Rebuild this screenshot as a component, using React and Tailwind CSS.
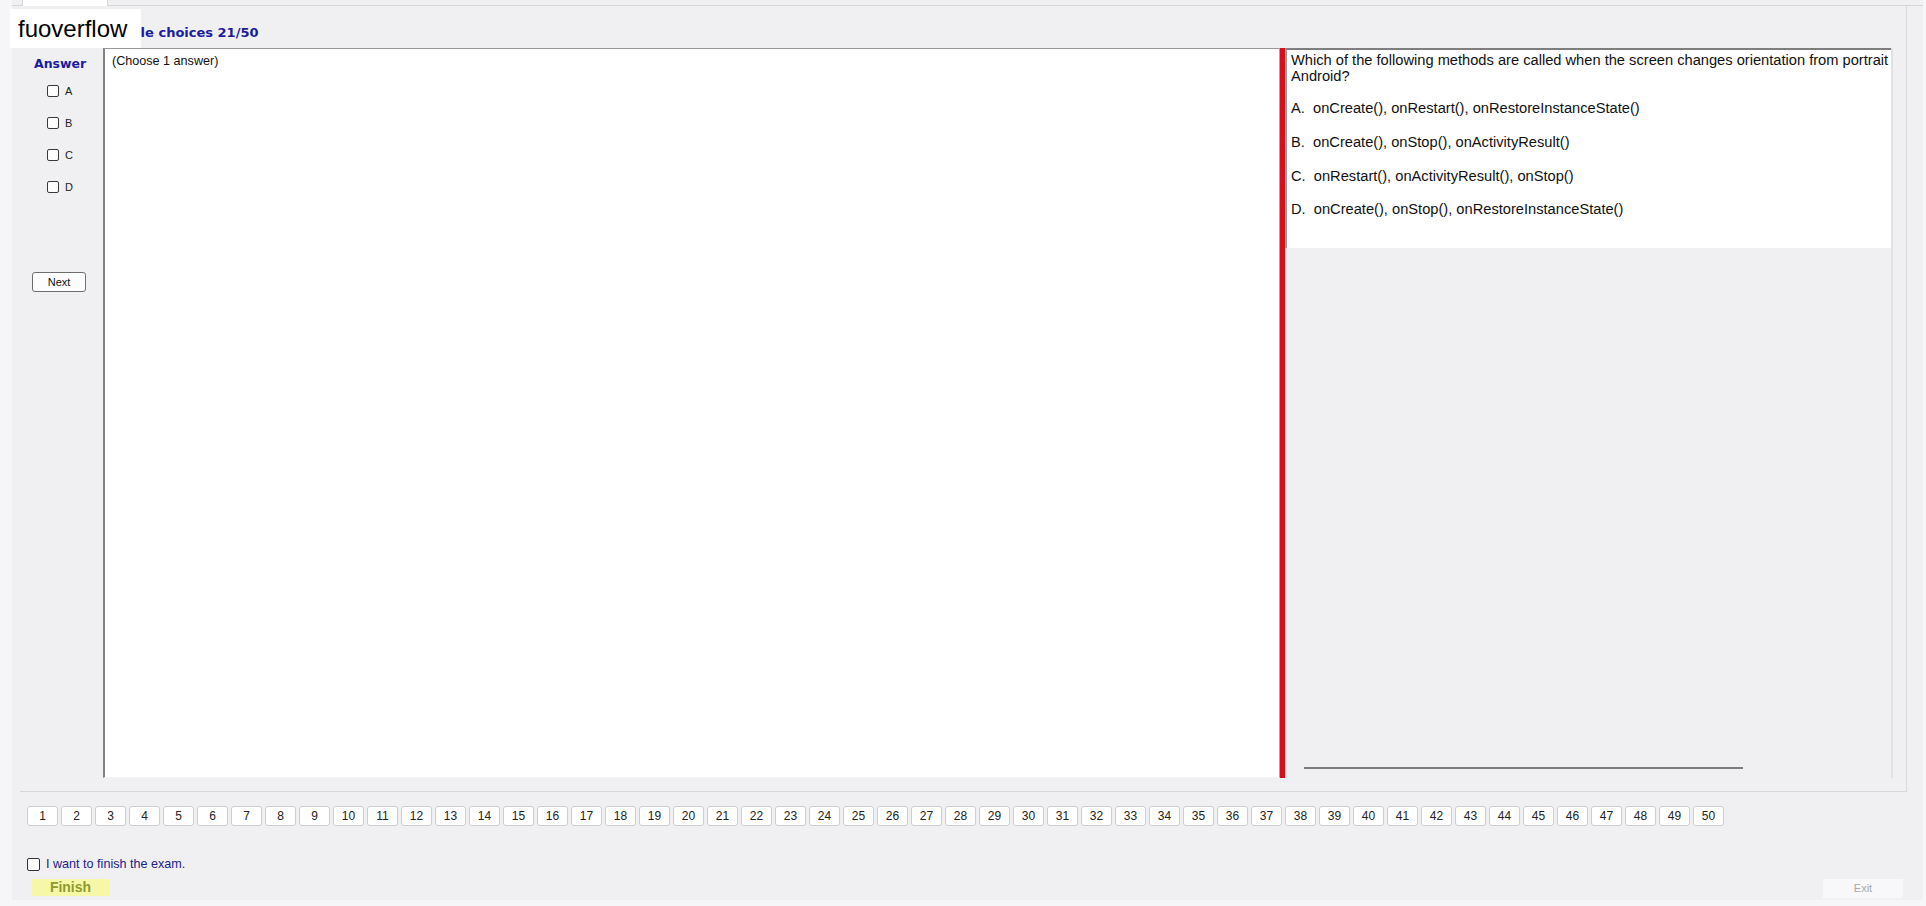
const letters = ["A", "B", "C", "D"];
const pages = Array.from({ length: 50 }, (_, i) => i + 1);

const options = [
  { key: "A", text: "onCreate(), onRestart(), onRestoreInstanceState()", mt: "mt-[16px]" },
  { key: "B", text: "onCreate(), onStop(), onActivityResult()", mt: "mt-[18px]" },
  { key: "C", text: "onRestart(), onActivityResult(), onStop()", mt: "mt-[18px]" },
  { key: "D", text: "onCreate(), onStop(), onRestoreInstanceState()", mt: "mt-[17px]" },
];

// small square checkbox like the winforms one
const Box = () => (
  <span className="block w-[12px] h-[12px] rounded-[2px] border border-[#3a3a3a] bg-white" />
);

const App = () => {
  return (
    <div className="relative w-[1926px] h-[906px] overflow-hidden bg-[#f6f6f8] font-['Liberation_Sans',Arial,sans-serif] text-[#111]">
      <div className="ml-[12px] w-[1911px] h-[900px] bg-[#f0f0f2] flex flex-col">
        {/* tab strip */}
        <div className="flex h-[6px] border-b border-[#d6d6d6]">
          <div className="ml-[10px] w-[86px] h-[6px] bg-white border-x border-[#d6d6d6]" />
        </div>

        {/* main frame */}
        <div className="ml-[8px] w-[1887px] h-[786px] flex flex-col border-r border-b border-[#d8d8da]">
          {/* title */}
          <div className="h-[42px] flex items-end pb-[8px] pl-[74px]">
            <span className="font-['DejaVu_Sans',Verdana,sans-serif] font-bold text-[13px] leading-[15px] text-[#1c1c9e]">
              Multiple choices 21/50
            </span>
          </div>

          <div className="h-[730px] flex">
            {/* answer column */}
            <div className="w-[83px] flex flex-col">
              <div className="pt-[8px] pl-[14px] font-['DejaVu_Sans',Verdana,sans-serif] font-bold text-[12.5px] leading-[15px] text-[#1c1c9e]">
                Answer
              </div>
              <div className="mt-[4px] flex flex-col">
                {letters.map((l) => (
                  <div key={l} className="h-[32px] flex items-center pl-[27px] gap-[6px]">
                    <Box />
                    <span className="text-[11px] text-[#222]">{l}</span>
                  </div>
                ))}
              </div>
              <button className="mt-[69px] ml-[12px] w-[54px] h-[20px] rounded-[3px] border border-[#6e6e6e] bg-[#fdfdfd] text-[11px] text-[#111] flex items-center justify-center">
                Next
              </button>
            </div>

            {/* answer text area */}
            <div className="w-[1177px] bg-white border-l-2 border-l-[#828282] border-t border-t-[#9a9a9a] border-r border-r-[#a8a8a8] border-b border-b-[#f4f4f4]">
              <div className="pl-[7px] pt-[4px] text-[12.6px] leading-[16px] text-[#111]">
                (Choose 1 answer)
              </div>
            </div>

            {/* splitter */}
            <div className="w-[5px] bg-[#d3101c]" />

            {/* question panel */}
            <div className="w-[608px] flex flex-col border-r-2 border-r-[#e2e2e4]">
              <div className="h-[200px] bg-white border-t-2 border-t-[#7e7e7e] border-l-2 border-l-[#9c9c9c] overflow-hidden pl-[4px] pt-[2px] text-[14.67px] leading-[16px] text-[#111]">
                <div className="whitespace-nowrap">
                  Which of the following methods are called when the screen changes orientation from portrait to landscape in
                </div>
                <div>Android?</div>
                {options.map((o) => (
                  <div key={o.key} className={`${o.mt} whitespace-pre`}>
                    {o.key + ".  " + o.text}
                  </div>
                ))}
              </div>
              <div className="flex-1 flex flex-col border-l border-[#e6e6e6]">
                <div className="mt-[519px] ml-[18px] w-[439px] h-[2px] bg-[#7c7c7c]" />
              </div>
            </div>
          </div>
        </div>

        {/* question navigator */}
        <div className="mt-[14px] pl-[15px] flex gap-[3px]">
          {pages.map((p) => (
            <button
              key={p}
              className="w-[31px] h-[20px] rounded-[3px] border border-[#cdcdcd] bg-white text-[12px] text-[#222] flex items-center justify-center"
            >
              {p}
            </button>
          ))}
        </div>

        {/* finish confirm */}
        <div className="mt-[31px] pl-[15px] flex items-center gap-[6px]">
          <span className="block w-[13px] h-[13px] rounded-[2px] border border-[#333] bg-white" />
          <span className="text-[12.6px] leading-[14px] text-[#24208a]">I want to finish the exam.</span>
        </div>

        <div className="mt-[8px] flex justify-between pl-[20px] pr-[20px]">
          <div className="w-[77px] h-[17px] bg-[#f6f8a8] flex items-center justify-center">
            <span className="font-bold text-[14px] leading-[17px] text-[#8e9a2c]">Finish</span>
          </div>
          <div className="w-[80px] h-[19px] bg-[#f8f8fa] flex items-center justify-center">
            <span className="text-[11px] text-[#a8a8a8]">Exit</span>
          </div>
        </div>
      </div>

      {/* watermark */}
      <div className="absolute left-[10px] top-[9px] w-[131px] h-[39px] bg-white flex items-center pl-[8px]">
        <span className="text-[24px] text-black">fuoverflow</span>
      </div>
    </div>
  );
};

export default App;
